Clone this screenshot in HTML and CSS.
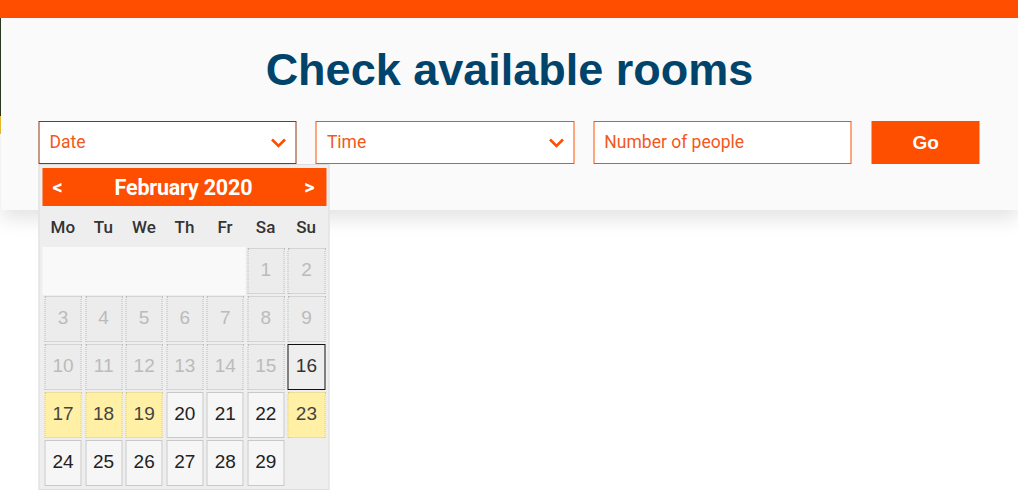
FILE: index.html
```html
<!DOCTYPE html>
<html lang="en">
<head>
<meta charset="utf-8">
<title>Check available rooms</title>
<link rel="stylesheet" href="styles.css">
</head>
<body>
<div class="topbar"></div>
<section class="panel">
  <h1 class="title">Check available rooms</h1>
  <form class="search">
    <div class="field select focused">
      <span class="placeholder">Date</span>
      <svg class="chevron" width="16" height="10" viewBox="0 0 16 10"><path d="M1.5 1.5 L8 8 L14.5 1.5" fill="none" stroke="currentColor" stroke-width="2.6"/></svg>
      <div class="datepicker">
        <div class="dp-header">
          <span class="dp-nav">&lt;</span>
          <span class="dp-title">February 2020</span>
          <span class="dp-nav">&gt;</span>
        </div>
        <table class="dp-table">
          <thead>
            <tr><th>Mo</th><th>Tu</th><th>We</th><th>Th</th><th>Fr</th><th>Sa</th><th>Su</th></tr>
          </thead>
          <tbody>
            <tr>
              <td class="empty" colspan="5"></td>
              <td><span class="day disabled">1</span></td><td><span class="day disabled">2</span></td>
            </tr>
            <tr>
              <td><span class="day disabled">3</span></td><td><span class="day disabled">4</span></td><td><span class="day disabled">5</span></td><td><span class="day disabled">6</span></td><td><span class="day disabled">7</span></td><td><span class="day disabled">8</span></td><td><span class="day disabled">9</span></td>
            </tr>
            <tr>
              <td><span class="day disabled">10</span></td><td><span class="day disabled">11</span></td><td><span class="day disabled">12</span></td><td><span class="day disabled">13</span></td><td><span class="day disabled">14</span></td><td><span class="day disabled">15</span></td><td><span class="day today">16</span></td>
            </tr>
            <tr>
              <td><span class="day closed">17</span></td><td><span class="day closed">18</span></td><td><span class="day closed">19</span></td><td><span class="day">20</span></td><td><span class="day">21</span></td><td><span class="day">22</span></td><td><span class="day closed">23</span></td>
            </tr>
            <tr>
              <td><span class="day">24</span></td><td><span class="day">25</span></td><td><span class="day">26</span></td><td><span class="day">27</span></td><td><span class="day">28</span></td><td><span class="day">29</span></td><td class="blank"></td>
            </tr>
          </tbody>
        </table>
      </div>
    </div>
    <div class="field select">
      <span class="placeholder">Time</span>
      <svg class="chevron" width="16" height="10" viewBox="0 0 16 10"><path d="M1.5 1.5 L8 8 L14.5 1.5" fill="none" stroke="currentColor" stroke-width="2.6"/></svg>
    </div>
    <div class="field">
      <span class="placeholder">Number of people</span>
    </div>
    <button class="go" type="button">Go</button>
  </form>
</section>
</body>
</html>
```
FILE: styles.css
```css
* { box-sizing: border-box; }

html, body {
  margin: 0;
  padding: 0;
}

body {
  font-family: "Liberation Sans", Arial, sans-serif;
  background:
    linear-gradient(#2b3a24, #2b3a24) 0 18px / 1px 98px no-repeat,
    linear-gradient(#f1c232, #f1c232) 0 116px / 1px 18px no-repeat,
    #ffffff;
  min-height: 502px;
}

.topbar {
  height: 18px;
  background: #ff4e00;
}

.panel {
  margin-left: 1px;
  height: 192px;
  background: #fafafa;
  box-shadow: 0 9px 18px rgba(0, 0, 0, 0.11);
  padding-top: 26px;
}

.title {
  margin: 0;
  text-align: center;
  font-family: "Liberation Sans", Arial, sans-serif;
  font-weight: 700;
  font-size: 45px;
  line-height: 52px;
  color: #00446c;
}

.search {
  margin: 25px auto 0;
  width: 941px;
  display: flex;
  gap: 19px;
  transform: translateX(-0.5px);
}

.field {
  position: relative;
  width: 259px;
  height: 43px;
  background: #ffffff;
  border: 1px solid #fe5000;
  display: flex;
  align-items: center;
  padding: 0 9px 0 10px;
  color: #f35a1c;
}

.field.focused {
  border-color: #93300e;
}

.placeholder {
  flex: 1;
  font-family: Roboto, "Liberation Sans", sans-serif;
  font-size: 17.5px;
  color: #f2581b;
  padding-bottom: 1px;
}

.chevron {
  color: #fe4e00;
  display: block;
  margin-top: 1px;
}

.go {
  width: 108px;
  height: 43px;
  margin-left: 1px;
  border: 0;
  background: #fe4e00;
  color: #ffffff;
  font-family: "Liberation Sans", Arial, sans-serif;
  font-weight: 700;
  font-size: 19px;
  padding: 0;
}

/* datepicker */
.datepicker {
  position: absolute;
  top: 42px;
  left: -1px;
  width: 291px;
  background: #eeeeee;
  border: 1px solid #dddddd;
  padding: 3px 2px 2px 3px;
  z-index: 2;
}

.dp-header {
  height: 38px;
  background: #fe4e00;
  color: #ffffff;
  display: flex;
  align-items: center;
  justify-content: space-between;
  padding: 0 12px 0 10px;
  font-family: Roboto, "Liberation Sans", sans-serif;
  font-weight: 700;
}

.dp-title {
  font-size: 21.5px;
  letter-spacing: -0.2px;
}

.dp-nav {
  font-size: 20px;
}

.dp-table {
  width: 100%;
  table-layout: fixed;
  border-collapse: separate;
  border-spacing: 0;
}

.dp-table th {
  height: 41px;
  padding: 0;
  font-family: Roboto, "Liberation Sans", sans-serif;
  font-weight: 500;
  font-size: 17px;
  color: #333333;
  text-align: center;
}

.dp-table td {
  padding: 1px 1.5px 1px 2px;
  height: 48px;
}

.dp-table td.empty {
  background: #f9f9f9;
}

.day {
  display: block;
  height: 46px;
  line-height: 42px;
  text-align: center;
  font-family: "Liberation Sans", Arial, sans-serif;
  font-size: 19px;
  color: #222222;
  background: #f6f6f6;
  border: 1px solid #c8c8c8;
}

.day.disabled {
  background: #ececec;
  border: 1px dotted #bdbdbd;
  color: #bbbbbb;
}

.day.today {
  background: #eeeeee;
  border: 1px solid #111111;
  color: #333333;
}

.day.closed {
  background: #fff0a6;
  border: 1px dotted #d8cc90;
  color: #444444;
}
```
